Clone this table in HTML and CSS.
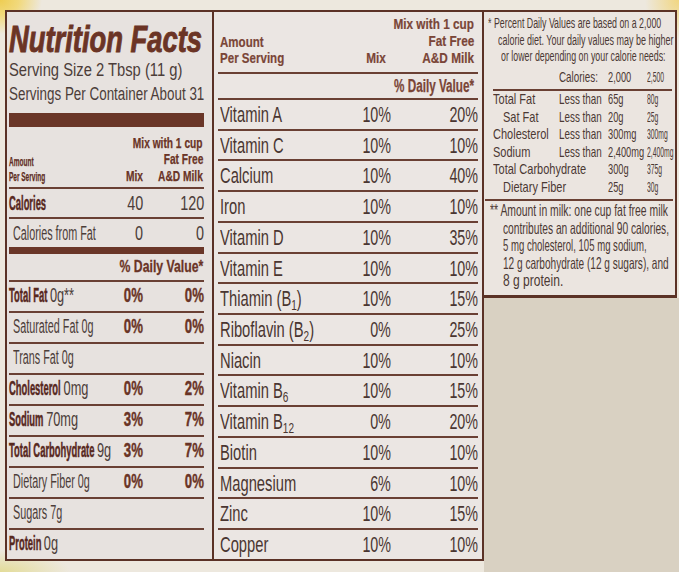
FILE: index.html
```html
<!DOCTYPE html>
<html lang="en">
<head>
<meta charset="utf-8">
<title>Nutrition Facts</title>
<link rel="stylesheet" href="styles.css">
</head>
<body>
<div class="page">
  <div class="label">
    <section class="lp">
      <h1 class="title"><span class="sq">Nutrition Facts</span></h1>
      <p class="serv"><span class="sq s1">Serving Size 2 Tbsp (11 g)</span></p>
      <p class="serv"><span class="sq s2">Servings Per Container About 31</span></p>
      <div class="bar"></div>
      <div class="lhead">
        <div class="c"><span class="sq am">Amount<br>Per Serving</span></div>
        <div class="c end"><span class="sq hd">Mix</span></div>
        <div class="c end stack pr1"><span class="sq hd">Mix with 1 cup</span><span class="sq hd">Fat Free</span><span class="sq hd">A&amp;D Milk</span></div>
      </div>
      <div class="lrow cal">
        <div class="c"><span class="sq lb">Calories</span></div>
        <div class="c end"><span class="sq vr">40</span></div>
        <div class="c end"><span class="sq vr">120</span></div>
      </div>
      <div class="lrow cff">
        <div class="c"><span class="sq lr">Calories from Fat</span></div>
        <div class="c end"><span class="sq vr">0</span></div>
        <div class="c end"><span class="sq vr">0</span></div>
      </div>
      <div class="lrow dvr">
        <div class="c end span3 pr1"><span class="sq dvl">% Daily Value*</span></div>
      </div>
      <div class="lrow">
        <div class="c"><span class="sq lb">Total Fat <span class="sq rg">0g**</span></span></div>
        <div class="c end"><span class="sq vb">0%</span></div>
        <div class="c end"><span class="sq vb">0%</span></div>
      </div>
      <div class="lrow">
        <div class="c"><span class="sq lr">Saturated Fat 0g</span></div>
        <div class="c end"><span class="sq vb">0%</span></div>
        <div class="c end"><span class="sq vb">0%</span></div>
      </div>
      <div class="lrow">
        <div class="c"><span class="sq lr">Trans Fat 0g</span></div>
        <div class="c end"></div>
        <div class="c end"></div>
      </div>
      <div class="lrow">
        <div class="c"><span class="sq lb">Cholesterol <span class="sq rg">0mg</span></span></div>
        <div class="c end"><span class="sq vb">0%</span></div>
        <div class="c end"><span class="sq vb">2%</span></div>
      </div>
      <div class="lrow">
        <div class="c"><span class="sq lb">Sodium <span class="sq rg">70mg</span></span></div>
        <div class="c end"><span class="sq vb">3%</span></div>
        <div class="c end"><span class="sq vb">7%</span></div>
      </div>
      <div class="lrow">
        <div class="c"><span class="sq lb">Total Carbohydrate <span class="sq rg">9g</span></span></div>
        <div class="c end"><span class="sq vb">3%</span></div>
        <div class="c end"><span class="sq vb">7%</span></div>
      </div>
      <div class="lrow">
        <div class="c"><span class="sq lr">Dietary Fiber 0g</span></div>
        <div class="c end"><span class="sq vb">0%</span></div>
        <div class="c end"><span class="sq vb">0%</span></div>
      </div>
      <div class="lrow">
        <div class="c"><span class="sq lr">Sugars 7g</span></div>
        <div class="c end"></div>
        <div class="c end"></div>
      </div>
      <div class="lrow last">
        <div class="c"><span class="sq lb">Protein <span class="sq rg">0g</span></span></div>
        <div class="c end"></div>
        <div class="c end"></div>
      </div>
    </section>

    <section class="mp">
      <div class="mhead">
        <div class="c"><span class="sq mam">Amount<br>Per Serving</span></div>
        <div class="c end pr5"><span class="sq mh">Mix</span></div>
        <div class="c end stack pr4"><span class="sq mh">Mix with 1 cup</span><span class="sq mh">Fat Free</span><span class="sq mh">A&amp;D Milk</span></div>
      </div>
      <div class="mdvr">
        <div class="c end pr4"><span class="sq mdv">% Daily Value*</span></div>
      </div>
      <div class="mrow"><div class="c"><span class="sq mt">Vitamin A</span></div><div class="c end"><span class="sq mv">10%</span></div><div class="c end"><span class="sq mv">20%</span></div></div>
      <div class="mrow"><div class="c"><span class="sq mt">Vitamin C</span></div><div class="c end"><span class="sq mv">10%</span></div><div class="c end"><span class="sq mv">10%</span></div></div>
      <div class="mrow"><div class="c"><span class="sq mt">Calcium</span></div><div class="c end"><span class="sq mv">10%</span></div><div class="c end"><span class="sq mv">40%</span></div></div>
      <div class="mrow"><div class="c"><span class="sq mt">Iron</span></div><div class="c end"><span class="sq mv">10%</span></div><div class="c end"><span class="sq mv">10%</span></div></div>
      <div class="mrow"><div class="c"><span class="sq mt">Vitamin D</span></div><div class="c end"><span class="sq mv">10%</span></div><div class="c end"><span class="sq mv">35%</span></div></div>
      <div class="mrow"><div class="c"><span class="sq mt">Vitamin E</span></div><div class="c end"><span class="sq mv">10%</span></div><div class="c end"><span class="sq mv">10%</span></div></div>
      <div class="mrow"><div class="c"><span class="sq mt">Thiamin (B<span class="sb">1</span>)</span></div><div class="c end"><span class="sq mv">10%</span></div><div class="c end"><span class="sq mv">15%</span></div></div>
      <div class="mrow"><div class="c"><span class="sq mt">Riboflavin (B<span class="sb">2</span>)</span></div><div class="c end"><span class="sq mv">0%</span></div><div class="c end"><span class="sq mv">25%</span></div></div>
      <div class="mrow"><div class="c"><span class="sq mt">Niacin</span></div><div class="c end"><span class="sq mv">10%</span></div><div class="c end"><span class="sq mv">10%</span></div></div>
      <div class="mrow"><div class="c"><span class="sq mt">Vitamin B<span class="sb">6</span></span></div><div class="c end"><span class="sq mv">10%</span></div><div class="c end"><span class="sq mv">15%</span></div></div>
      <div class="mrow"><div class="c"><span class="sq mt">Vitamin B<span class="sb">12</span></span></div><div class="c end"><span class="sq mv">0%</span></div><div class="c end"><span class="sq mv">20%</span></div></div>
      <div class="mrow"><div class="c"><span class="sq mt">Biotin</span></div><div class="c end"><span class="sq mv">10%</span></div><div class="c end"><span class="sq mv">10%</span></div></div>
      <div class="mrow"><div class="c"><span class="sq mt">Magnesium</span></div><div class="c end"><span class="sq mv">6%</span></div><div class="c end"><span class="sq mv">10%</span></div></div>
      <div class="mrow"><div class="c"><span class="sq mt">Zinc</span></div><div class="c end"><span class="sq mv">10%</span></div><div class="c end"><span class="sq mv">15%</span></div></div>
      <div class="mrow last"><div class="c"><span class="sq mt">Copper</span></div><div class="c end"><span class="sq mv">10%</span></div><div class="c end"><span class="sq mv">10%</span></div></div>
    </section>
  </div>

  <div class="side">
    <section class="rp">
      <div class="note">
        <div class="nl n1"><span class="sq">* Percent Daily Values are based on a 2,000</span></div>
        <div class="nl n2"><span class="sq">calorie diet. Your daily values may be higher</span></div>
        <div class="nl n3"><span class="sq">or lower depending on your calorie needs:</span></div>
      </div>
      <div class="dvcal">
        <div></div>
        <div><span class="sq c2">Calories:</span></div>
        <div><span class="sq c3">2,000</span></div>
        <div><span class="sq c4">2,500</span></div>
      </div>
      <div class="dvt">
        <div><span class="sq c1">Total Fat</span></div><div><span class="sq c2">Less than</span></div><div><span class="sq c3">65g</span></div><div><span class="sq c4">80g</span></div>
        <div><span class="sq c1 ind">Sat Fat</span></div><div><span class="sq c2">Less than</span></div><div><span class="sq c3">20g</span></div><div><span class="sq c4">25g</span></div>
        <div><span class="sq c1">Cholesterol</span></div><div><span class="sq c2">Less than</span></div><div><span class="sq c3">300mg</span></div><div><span class="sq c4">300mg</span></div>
        <div><span class="sq c1">Sodium</span></div><div><span class="sq c2">Less than</span></div><div><span class="sq c3">2,400mg</span></div><div><span class="sq c4">2,400mg</span></div>
        <div><span class="sq c1">Total Carbohydrate</span></div><div></div><div><span class="sq c3">300g</span></div><div><span class="sq c4">375g</span></div>
        <div><span class="sq c1 ind">Dietary Fiber</span></div><div></div><div><span class="sq c3">25g</span></div><div><span class="sq c4">30g</span></div>
      </div>
      <div class="foot">
        <div class="fl f1"><span class="sq">** Amount in milk: one cup fat free milk</span></div>
        <div class="fl f2"><span class="sq">contributes an additional 90 calories,</span></div>
        <div class="fl f3"><span class="sq">5 mg cholesterol, 105 mg sodium,</span></div>
        <div class="fl f4"><span class="sq">12 g carbohydrate (12 g sugars), and</span></div>
        <div class="fl f5"><span class="sq">8 g protein.</span></div>
      </div>
    </section>
    <div class="fill"></div>
  </div>
</div>
</body>
</html>
```

FILE: styles.css
```css
* { box-sizing: border-box; margin: 0; padding: 0; }

html, body { width: 679px; height: 572px; overflow: hidden; }

body {
  font-family: "Liberation Sans", Arial, sans-serif;
  color: #4b3a35;
  background:
    radial-gradient(ellipse 42px 34px at 0 0, #eecd52 0%, #f1d97c 45%, rgba(238,232,222,0) 100%),
    radial-gradient(ellipse 34px 40px at 100% 0, #f1d680 0%, rgba(238,232,222,0) 100%),
    radial-gradient(ellipse 70px 22px at 0 100%, #e3dc98 0%, rgba(236,231,219,0) 100%),
    #ede8de;
}

.page { display: flex; width: 679px; height: 572px; padding: 10px 0 0 5px; overflow: hidden; }

/* generic squeezed text (condensed type) */
.sq {
  display: inline-block;
  white-space: nowrap;
  transform: scaleX(var(--s, 1));
  transform-origin: 0 50%;
}
.c { display: flex; min-width: 0; align-items: flex-start; }
.end { justify-content: flex-end; }
.end > .sq { transform-origin: 100% 50%; }
.stack { flex-direction: column; align-items: flex-end; justify-content: flex-end; }
.span3 { grid-column: 1 / 4; }
.pr1 { padding-right: 1px; }
.pr4 { padding-right: 4px; }
.pr5 { padding-right: 5px; }

/* label frame */
.label {
  display: flex;
  align-self: flex-start;
  height: 551px;
  border: 2px solid #5b3226;
  background: #e8e3e0;
}

/* ---------- left panel ---------- */
.lp {
  width: 207px;
  overflow: hidden;
  border-right: 2px solid #5b3226;
  padding: 0 8px 0 1.5px;
  background: #e7e2df;
}
.title {
  margin-top: 9.5px;
  font-size: 36px;
  line-height: 36px;
  font-weight: 700;
  font-style: italic;
  color: #6b3425;
  -webkit-text-stroke: 0.9px #6b3425;
}
.title .sq { --s: .76; }
.serv { font-size: 18px; line-height: 24px; color: #4c3d39; }
.s1 { --s: .82; }
.s2 { --s: .745; }
.bar { height: 14px; margin-top: 7.5px; background: #6a3628; }

.lhead {
  display: grid;
  grid-template-columns: minmax(0, 1fr) 60px 61px;
  align-items: end;
  height: 62px;
  padding-bottom: 3px;
  border-bottom: 2px solid #6a4034;
}
.hd { font-size: 15px; line-height: 16.5px; font-weight: 700; color: #6a3426; --s: .68; -webkit-text-stroke: .25px #6a3426; }
.am { font-size: 13px; line-height: 15px; font-weight: 700; color: #5d2c21; --s: .5; -webkit-text-stroke: .25px #5d2c21; }

.lrow {
  display: grid;
  grid-template-columns: minmax(0, 1fr) 60px 61px;
  height: 31px;
  padding-bottom: 3px;
  font-size: 20px;
  line-height: 26px;
  border-bottom: 2px solid #6a4034;
}
.lrow.cal { height: 30px; padding-bottom: 0; line-height: 28px; }
.lrow.cff { height: 35px; padding-bottom: 0; line-height: 28px; border-bottom: 7px solid #6a3628; }
.lrow.dvr { height: 28px; padding-bottom: 0; font-size: 17px; line-height: 26px; }
.lrow.last { height: 29px; border-bottom: 0; }

.lb { font-weight: 700; color: #57281e; --s: .47; -webkit-text-stroke: .5px #57281e; }
.lb .rg { font-weight: 400; color: #4c3d39; --s: 1.36; -webkit-text-stroke: 0; }
.lr { color: #4c3d39; --s: .54; margin-left: 4.5px; }
.vb { font-weight: 700; color: #6a3426; --s: .66; -webkit-text-stroke: .4px #6a3426; }
.vr { color: #4c3d39; --s: .72; }
.dvl { font-weight: 700; color: #6a3426; --s: .72; -webkit-text-stroke: .3px #6a3426; }

/* ---------- middle panel ---------- */
.mp { width: 268px; overflow: hidden; padding: 0 4px; background: #ebe6e3; }
.mhead {
  display: grid;
  grid-template-columns: minmax(0, 1fr) 80px 87px;
  align-items: end;
  height: 62px;
  padding: 3.1px 0 5.9px;
  border-bottom: 2px solid #6a4034;
}
.mh { font-size: 15.5px; line-height: 17px; font-weight: 700; color: #7a4537; --s: .76; -webkit-text-stroke: .2px #7a4537; }
.mam { font-size: 15px; line-height: 16px; font-weight: 700; color: #7a4537; --s: .77; margin-left: 2px; -webkit-text-stroke: .2px #7a4537; }
.mdvr {
  height: 26px;
  font-size: 18px;
  line-height: 24px;
  border-bottom: 2px solid #6a4034;
}
.mdv { font-weight: 700; color: #7a4537; --s: .65; -webkit-text-stroke: .25px #7a4537; }
.mrow {
  display: grid;
  grid-template-columns: minmax(0, 1fr) 80px 87px;
  height: 30.73px;
  padding-top: 2px;
  font-size: 22px;
  line-height: 26.7px;
  border-bottom: 2px solid #6a4034;
}
.mrow.last { height: 28.73px; border-bottom: 0; }
.mt { color: #4a3631; --s: .67; margin-left: 2px; }
.mv { color: #4a3631; --s: .65; }
.sb { font-size: 15px; line-height: 0; vertical-align: -4px; }

/* ---------- right panel ---------- */
.side { width: 195px; display: flex; flex-direction: column; }
.rp {
  margin-right: 2px;
  overflow: hidden;
  padding-left: 4px;
  border: 2px solid #5b3226;
  border-left: 0;
  border-bottom-width: 3px;
  background: #ebe5e0;
  color: #4b3934;
}
.fill { flex: 1; background: #d9d1c2; }

.note { padding-top: 3.4px; font-size: 15.5px; line-height: 16.5px; }
.n1 .sq { --s: .57; }
.n2 { padding-left: 10px; }
.n2 .sq { --s: .58; }
.n3 { padding-left: 13px; }
.n3 .sq { --s: .57; }

.dvcal, .dvt {
  display: grid;
  grid-template-columns: 66px 49px 39px minmax(0, 1fr);
  margin: 0 3px 0 5px;
  font-size: 14.5px;
  line-height: 17.6px;
}
.dvcal { margin-top: 4.3px; padding-bottom: 2.2px; border-bottom: 2px solid #6a4034; }
.dvt { padding-bottom: 2.2px; }
.c1 { --s: .76; }
.c2 { --s: .68; }
.c3 { --s: .64; }
.c4 { --s: .47; }
.ind { margin-left: 10px; }

.foot {
  margin: 0 2px 0 -3px;
  padding: 1.5px 0 5.2px;
  border-top: 2px solid #6a4034;
  font-size: 16.5px;
  line-height: 17.5px;
}
.fl { padding-left: 18px; }
.f1 { padding-left: 5px; }
.f1 .sq { --s: .63; }
.f2 .sq { --s: .62; }
.f3 .sq { --s: .58; }
.f4 .sq { --s: .61; }
.f5 .sq { --s: .73; }
```
